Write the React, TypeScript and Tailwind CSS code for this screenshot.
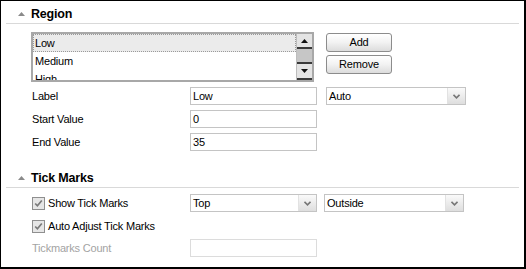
const Triangle = () => (
  <svg width="7" height="4" viewBox="0 0 7 4" className="shrink-0">
    <polygon points="0,4 3.5,0 7,4" fill="#8a8a8a" />
  </svg>
);

const SectionHeader = ({ title }: { title: string }) => (
  <div className="mx-[5px] h-[23px] border-b border-[#d9d9d9] flex items-center pl-[12px] pt-[4px] gap-[6px]">
    <Triangle />
    <span className="text-[12.5px] font-bold text-black">{title}</span>
  </div>
);

const Chevron = () => (
  <svg width="7" height="5" viewBox="0 0 7 5">
    <polyline points="0.5,0.8 3.5,3.8 6.5,0.8" fill="none" stroke="#777" strokeWidth="1.6" />
  </svg>
);

const TextBox = ({ value, disabled }: { value?: string; disabled?: boolean }) => (
  <div
    className={
      disabled
        ? "w-[127px] h-[18px] border border-[#dcdcdc] bg-white"
        : "w-[127px] h-[18px] border border-[#c4c4c4] bg-white flex items-center pl-[2px] text-black"
    }
  >
    {value}
  </div>
);

const Select = ({ value, width }: { value: string; width: string }) => (
  <div className={`${width} h-[18px] border border-[#c4c4c4] bg-white flex items-center text-black`}>
    <span className="flex-1 pl-[2px]">{value}</span>
    <div className="w-[18px] h-full bg-gradient-to-b from-[#fafafa] to-[#dedede] border-l border-[#e2e2e2] flex items-center justify-center">
      <Chevron />
    </div>
  </div>
);

const Button = ({ label }: { label: string }) => (
  <div className="w-[66px] h-[19px] rounded-[3px] border border-[#8c8c8c] bg-gradient-to-b from-[#ffffff] via-[#f2f2f2] to-[#dcdcdc] flex items-center justify-center text-black">
    {label}
  </div>
);

const CheckBox = () => (
  <div className="w-[13px] h-[13px] border border-[#8f8f8f] bg-[#e6e6e6] flex items-center justify-center shrink-0">
    <svg width="9" height="9" viewBox="0 0 9 9">
      <polyline points="1.2,4.5 3.4,6.8 7.8,1.5" fill="none" stroke="#7a7a7a" strokeWidth="1.7" />
    </svg>
  </div>
);

const ScrollArrow = ({ up }: { up?: boolean }) => (
  <svg width="7" height="4" viewBox="0 0 7 4">
    <polygon points={up ? "0,4 3.5,0 7,4" : "0,0 3.5,4 7,0"} fill="#111" />
  </svg>
);

export default function App() {
  return (
    <div className="w-[526px] h-[269px] bg-white border-l border-t border-r-2 border-b-2 border-black font-['Liberation_Sans',Arial,sans-serif] text-[11px] tracking-[-0.2px] overflow-hidden">
      <SectionHeader title="Region" />

      <div className="pl-[30px] pt-[8px]">
        {/* list + buttons */}
        <div className="flex items-start gap-[12px]">
          <div className="w-[283px] h-[50px] border-2 border-[#a8a8a8] flex overflow-hidden">
            <div className="flex-1 flex flex-col text-black">
              <div className="h-[18px] shrink-0 bg-[#ebebeb] border border-dotted border-[#9a9a9a] flex items-center pl-[1px]">Low</div>
              <div className="h-[18px] shrink-0 flex items-center pl-[2px]">Medium</div>
              <div className="h-[18px] shrink-0 flex items-center pl-[2px]">High</div>
            </div>
            <div className="w-[16px] flex flex-col border-l border-[#bdbdbd]">
              <div className="h-[15px] bg-[#e4e4e4] border-b-2 border-[#3a3a3a] flex items-center justify-center">
                <ScrollArrow up />
              </div>
              <div className="h-[15px] bg-[#c6c6c6] border-b-2 border-[#3a3a3a]" />
              <div className="flex-1 bg-[#e4e4e4] border-b-2 border-[#3a3a3a] flex items-center justify-center">
                <ScrollArrow />
              </div>
            </div>
          </div>
          <div className="flex flex-col gap-[3px] mt-[1px]">
            <Button label="Add" />
            <Button label="Remove" />
          </div>
        </div>

        {/* form rows */}
        <div className="mt-[5px] flex flex-col gap-[5px] text-black">
          <div className="flex items-center">
            <span className="w-[159px] pl-[1px]">Label</span>
            <TextBox value="Low" />
            <div className="ml-[9px]">
              <Select value="Auto" width="w-[140px]" />
            </div>
          </div>
          <div className="flex items-center">
            <span className="w-[159px] pl-[1px]">Start Value</span>
            <TextBox value="0" />
          </div>
          <div className="flex items-center">
            <span className="w-[159px] pl-[1px]">End Value</span>
            <TextBox value="35" />
          </div>
        </div>
      </div>

      <div className="mt-[14px]">
        <SectionHeader title="Tick Marks" />
      </div>

      <div className="pl-[30px] pt-[6px] flex flex-col text-black">
        <div className="flex items-center">
          <div className="w-[159px] flex items-center gap-[3px] pl-[1px]">
            <CheckBox />
            <span>Show Tick Marks</span>
          </div>
          <Select value="Top" width="w-[127px]" />
          <div className="ml-[7px]">
            <Select value="Outside" width="w-[140px]" />
          </div>
        </div>
        <div className="flex items-center h-[18px] mt-[5px]">
          <div className="flex items-center gap-[3px] pl-[1px]">
            <CheckBox />
            <span>Auto Adjust Tick Marks</span>
          </div>
        </div>
        <div className="flex items-center mt-[4px]">
          <span className="w-[159px] pl-[1px] text-[#a3a3a3]">Tickmarks Count</span>
          <TextBox disabled />
        </div>
      </div>
    </div>
  );
}
